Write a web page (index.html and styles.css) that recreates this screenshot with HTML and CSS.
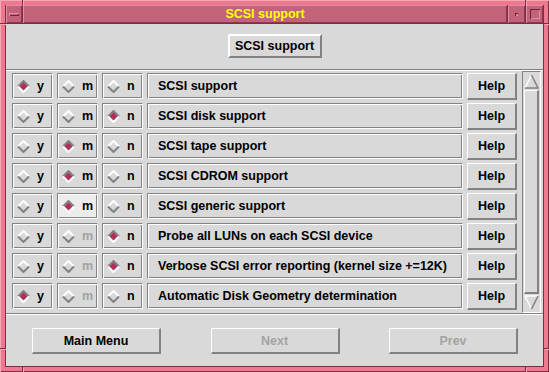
FILE: index.html
```html
<!DOCTYPE html>
<html lang="en">
<head>
    <meta charset="UTF-8">
    <title>SCSI support</title>
    <link rel="stylesheet" href="styles.css">
</head>
<body>
    <svg class="defs" width="0" height="0">
        <symbol id="d-off" viewBox="0 0 13 13">
            <path d="M1 6.5 L6.5 1 L12 6.5" fill="none" stroke="#fff" stroke-width="2"/>
            <path d="M1 6.5 L6.5 12 L12 6.5" fill="none" stroke="#828282" stroke-width="2"/>
        </symbol>
        <symbol id="d-on" viewBox="0 0 13 13">
            <path d="M6.5 2 L11 6.5 L6.5 11 L2 6.5 Z" fill="#b0305a"/>
            <path d="M1 6.5 L6.5 1 L12 6.5" fill="none" stroke="#828282" stroke-width="2"/>
            <path d="M1 6.5 L6.5 12 L12 6.5" fill="none" stroke="#fff" stroke-width="2"/>
        </symbol>
    </svg>

    <div class="frame">
        <span class="notch n-top n-left"></span>
        <span class="notch n-top n-right"></span>
        <span class="notch n-bottom n-left"></span>
        <span class="notch n-bottom n-right"></span>
        <span class="notch n-side n-left n-upper"></span>
        <span class="notch n-side n-right n-upper"></span>
        <span class="notch n-side n-left n-lower"></span>
        <span class="notch n-side n-right n-lower"></span>

        <div class="win">
            <div class="titlebar">
                <div class="tbtn min"><span class="bar"></span></div>
                <div class="title">SCSI support</div>
                <div class="tbtn small"><span class="dot"></span></div>
                <div class="tbtn max"><span class="sq"></span></div>
            </div>

            <div class="content">
                <div class="top">
                    <button class="btn head">SCSI support</button>
                </div>
                <div class="sep"></div>

                <div class="list">
                    <div class="rows" id="rows"></div>
                    <div class="scrollbar">
                        <svg class="arrow" width="15" height="15" viewBox="0 0 15 15">
                            <path d="M1 14 L7.5 1" stroke="#fff" stroke-width="1.5" fill="none"/>
                            <path d="M7.5 1 L14 14 L1 14" stroke="#828282" stroke-width="1.5" fill="none"/>
                        </svg>
                        <div class="slider"></div>
                        <svg class="arrow" width="15" height="15" viewBox="0 0 15 15">
                            <path d="M14 1 L1 1 L7.5 14" stroke="#fff" stroke-width="1.5" fill="none"/>
                            <path d="M7.5 14 L14 1" stroke="#828282" stroke-width="1.5" fill="none"/>
                        </svg>
                    </div>
                </div>
                <div class="sep"></div>

                <div class="actions">
                    <button class="btn wide">Main Menu</button>
                    <button class="btn wide off">Next</button>
                    <button class="btn wide off">Prev</button>
                </div>
            </div>
        </div>
    </div>

    <script>
        // label, selected value, whether "m" is available
        const options = [
            ["SCSI support", "y", true],
            ["SCSI disk support", "n", true],
            ["SCSI tape support", "m", true],
            ["SCSI CDROM support", "m", true],
            ["SCSI generic support", "m", true, "m"],
            ["Probe all LUNs on each SCSI device", "n", false],
            ["Verbose SCSI error reporting (kernel size +=12K)", "n", false],
            ["Automatic Disk Geometry determination", "y", false]
        ];

        const radio = (val, sel, enabled, active) => `
            <div class="choice${enabled ? '' : ' off'}${active ? ' active' : ''}">
                <svg width="13" height="13"><use href="#${sel === val ? 'd-on' : 'd-off'}"/></svg>
                <span>${val}</span>
            </div>`;

        document.getElementById('rows').innerHTML = options.map(([label, sel, hasM, active]) => `
            <div class="row">
                ${radio('y', sel, true, active === 'y')}
                ${radio('m', sel, hasM, active === 'm')}
                ${radio('n', sel, true, active === 'n')}
                <div class="label">${label}</div>
                <button class="btn help">Help</button>
            </div>`).join('');
    </script>
</body>
</html>
```

FILE: styles.css
```css
:root {
    --gray: #d9d9d9;
    --dark: #828282;
    --pink: #ee7890;
    --pink-light: #f9a8b8;
    --pink-dark: #7c2f42;
    --rose: #c2637a;
}

* {
    margin: 0;
    padding: 0;
    box-sizing: border-box;
}

body {
    font-family: "Liberation Sans", Arial, sans-serif;
    font-weight: bold;
    font-size: 12.5px;
    color: #000;
    background: var(--pink);
}

.defs {
    position: absolute;
}

.frame {
    position: relative;
    width: 549px;
    height: 372px;
    padding: 5px;
    background: var(--pink);
    box-shadow: inset 1px 1px 0 var(--pink-light), inset -1px -1px 0 var(--pink-dark);
}

/* resize handle marks on the frame */
.notch {
    position: absolute;
    background: var(--pink-dark);
    box-shadow: 1px 1px 0 var(--pink-light);
}

.n-top, .n-bottom { width: 1px; height: 5px; }
.n-top { top: 0; }
.n-bottom { bottom: 0; }
.n-top.n-left, .n-bottom.n-left { left: 22px; }
.n-top.n-right, .n-bottom.n-right { left: 525px; }
.n-side { width: 5px; height: 1px; }
.n-side.n-left { left: 0; }
.n-side.n-right { left: auto; right: 0; }
.n-upper { top: 23px; }
.n-lower { top: 348px; }

.win {
    height: 100%;
    display: flex;
    flex-direction: column;
    border: 1px solid var(--pink-dark);
    border-top: none;
}

/* title bar */
.titlebar {
    height: 19px;
    display: flex;
    gap: 1px;
    background: var(--pink-dark);
    border-bottom: 1px solid var(--pink-dark);
}

.tbtn, .title {
    background: var(--rose);
    box-shadow: inset 1px 1px 0 #e08ea0, inset -1px -1px 0 #8e3a4e;
    display: flex;
    align-items: center;
    justify-content: center;
}

.tbtn.min { width: 16px; }
.tbtn.small, .tbtn.max { width: 17px; }

.title {
    flex: 1;
    color: #ffff00;
    font-size: 12.5px;
}

.bar {
    width: 10px;
    height: 3px;
    background: var(--rose);
    box-shadow: inset 1px 1px 0 #e08ea0, inset -1px -1px 0 #6e2536;
}

.dot {
    width: 3px;
    height: 3px;
    box-shadow: inset 1px 1px 0 #6e2536, inset -1px -1px 0 #e08ea0;
}

.sq {
    width: 10px;
    height: 10px;
    box-shadow: inset 1px 1px 0 #6e2536, inset -1px -1px 0 #e08ea0;
}

/* window content */
.content {
    flex: 1;
    display: flex;
    flex-direction: column;
    background: var(--gray);
}

.top {
    height: 45px;
    display: flex;
    justify-content: center;
    padding-top: 10px;
}

.sep {
    height: 2px;
    border-top: 1px solid var(--dark);
    border-bottom: 1px solid #fff;
}

.btn {
    font: inherit;
    color: #000;
    background: var(--gray);
    border: none;
    border-top: 2px solid #fff;
    border-left: 2px solid #fff;
    border-right: 2px solid var(--dark);
    border-bottom: 2px solid var(--dark);
}

.btn.head {
    width: 94px;
    height: 24px;
}

.list {
    height: 242px;
    display: flex;
    padding-left: 6px;
    padding-right: 2px;
}

.rows {
    flex: 1;
    display: flex;
    flex-direction: column;
    gap: 4px;
    padding-top: 2px;
}

.row {
    display: flex;
    gap: 4px;
    height: 26px;
}

.choice, .label {
    height: 26px;
    display: flex;
    align-items: center;
    border: 1px solid;
    border-color: var(--dark) #fff #fff var(--dark);
    box-shadow: inset 1px 1px 0 #fff, inset -1px -1px 0 var(--dark);
}

.choice {
    width: 41px;
    padding-left: 4px;
    gap: 7px;
}

.choice.active {
    background: #ececec;
}

.choice.off span {
    color: #a3a3a3;
}

.label {
    width: 316px;
    padding-left: 10px;
    white-space: nowrap;
}

.btn.help {
    width: 50px;
    height: 27px;
    border-top-width: 1px;
    border-left-width: 1px;
}

.scrollbar {
    width: 19px;
    margin-left: 5px;
    display: flex;
    flex-direction: column;
    align-items: center;
    gap: 1px;
    padding: 2px 0;
    border: 1px solid;
    border-color: var(--dark) #fff #fff var(--dark);
}

.arrow {
    flex: none;
}

.slider {
    flex: 1;
    width: 15px;
    border-left: 1px solid #fff;
    border-top: 1px solid #fff;
    border-right: 2px solid var(--dark);
    border-bottom: 2px solid var(--dark);
}

.actions {
    flex: 1;
    display: flex;
    justify-content: space-between;
    padding: 13px 25px 0 26px;
}

.btn.wide {
    width: 129px;
    height: 26px;
    border-top-width: 1px;
    border-left-width: 1px;
}

.btn.off {
    color: #a3a3a3;
}
```
